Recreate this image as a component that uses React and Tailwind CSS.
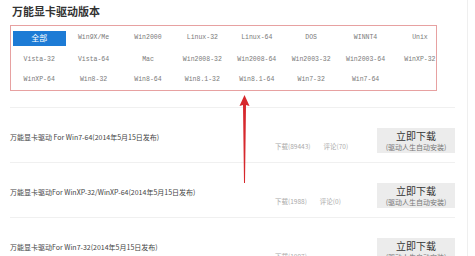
import React from 'react'

const versions = [
	'全部', 'Win9X/Me', 'Win2000', 'Linux-32', 'Linux-64', 'DOS', 'WINNT4', 'Unix',
	'Vista-32', 'Vista-64', 'Mac', 'Win2008-32', 'Win2008-64', 'Win2003-32', 'Win2003-64', 'WinXP-32',
	'WinXP-64', 'Win8-32', 'Win8-64', 'Win8.1-32', 'Win8.1-64', 'Win7-32', 'Win7-64',
]

const drivers = [
	{ title: '万能显卡驱动 For Win7-64(2014年5月15日发布)', downloads: '89443', comments: '70' },
	{ title: '万能显卡驱动For WinXP-32/WinXP-64(2014年5月15日发布)', downloads: '1988', comments: '0' },
	{ title: '万能显卡驱动For Win7-32(2014年5月15日发布)', downloads: '1097', comments: null },
]

const cjk = { fontFamily: '"Noto Sans CJK SC", "Noto Sans", sans-serif' }
const mono = { fontFamily: '"Liberation Mono", "Noto Sans CJK SC", monospace' }

function Arrow() {
	return (
		<svg className="absolute left-[238px] top-[94px]" width="14" height="92" viewBox="0 0 14 92">
			<path d="M6.5 1 L11.5 12 L8 11 L7 89 L6 89 L5 11 L1.5 12 Z" fill="#d6282d" />
		</svg>
	)
}

export default function App() {
	return (
		<div className="relative h-[256px] w-[475px] overflow-hidden bg-white text-[#333]" style={cjk}>
			<div className="h-[256px] w-[468px] border-r border-[#efefef] pl-[10px]">
				<div className="flex h-[25px] items-center pb-[3px] pl-[2px] text-[11px] font-bold leading-none">
					万能显卡驱动版本
				</div>

				<div className="w-[427px] border border-[#e7a1a1] pt-[1px]">
					<div className="ml-[1px] grid grid-cols-[repeat(8,54.4px)] grid-rows-[22px_21px_20px]">
						{versions.map((v, i) => (
							<div key={v} className="flex items-center justify-center">
								{i === 0 ? (
									<span className="flex h-[15px] w-[53px] items-center justify-center bg-[#1d7bd5] text-[8px] text-white" style={cjk}>
										{v}
									</span>
								) : (
									<span className="whitespace-nowrap text-[6.5px] text-[#7a7a7a]" style={mono}>
										{v}
									</span>
								)}
							</div>
						))}
					</div>
				</div>

				<div className="mt-[16px] w-[445px] border-t border-[#f0f0f0]">
					{drivers.map((d) => (
						<div key={d.title} className="flex h-[55px] border-b border-[#f0f0f0]">
							<p className="mt-[24px] flex-1 whitespace-nowrap text-[7px] leading-[10px] text-[#444]">{d.title}</p>
							<div className="mr-[16px] mt-[33px] flex w-[86px] gap-[13px] whitespace-nowrap text-[6.5px] leading-[10px] text-[#aaa]">
								<span>下载({d.downloads})</span>
								{d.comments !== null && <span>评论({d.comments})</span>}
							</div>
							<div className="mt-[20px] flex h-[25px] w-[78px] flex-col items-center bg-[#ececec] pt-[1px]">
								<span className="text-[10px] leading-[13px] text-[#333]">立即下载</span>
								<span className="text-[7px] leading-[10px] text-[#777]">(驱动人生自动安装)</span>
							</div>
						</div>
					))}
				</div>
			</div>
			<Arrow />
		</div>
	)
}
